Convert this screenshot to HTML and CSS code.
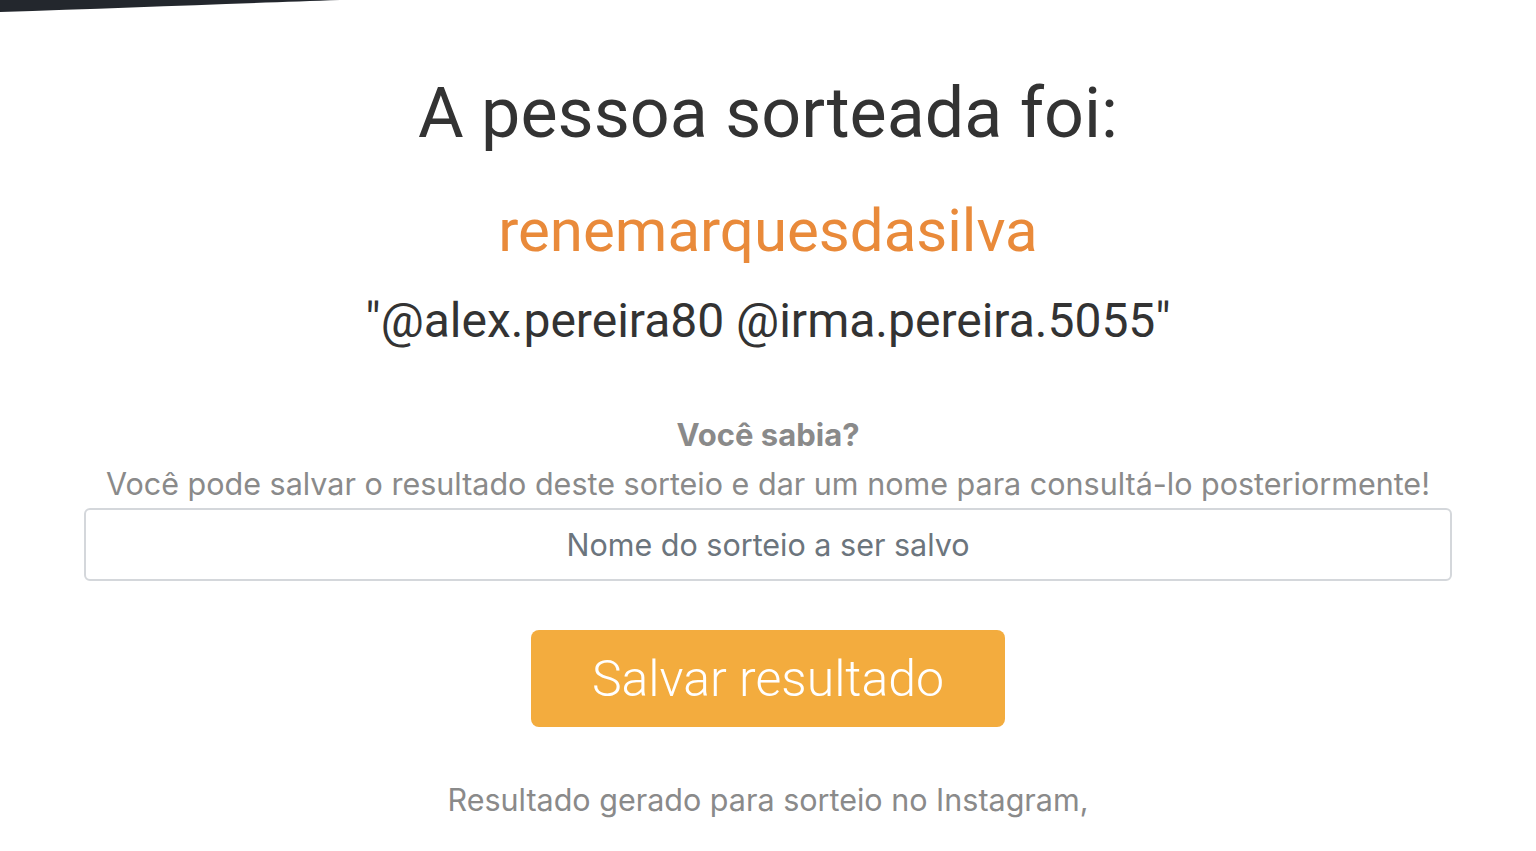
FILE: index.html
```html
<!DOCTYPE html>
<html>

<head>
<meta charset="utf-8">
<link rel="stylesheet" href="styles.css">
</head>

<body>

<svg class="edge" width="360" height="14" viewBox="0 0 360 14">
<path d="M0 0 H340 C250 3, 120 8, 0 12 Z" fill="#23272d"/>
</svg>

<div class="result">

<h1>A pessoa sorteada foi:</h1>

<div class="winner">renemarquesdasilva</div>
<div class="comment">"@alex.pereira80 @irma.pereira.5055"</div>

<div class="tip">
<div class="tip-title">Você sabia?</div>
<div class="tip-text">Você pode salvar o resultado deste sorteio e dar um nome para consultá-lo posteriormente!</div>
</div>

<input class="save-name" type="text" placeholder="Nome do sorteio a ser salvo">

<button class="save">Salvar resultado</button>

<div class="footer">Resultado gerado para sorteio no Instagram,</div>

</div>

</body>
</html>
```

FILE: styles.css
```css
body {
    margin: 0;
    background: #fff;
    font-family: Roboto, 'Liberation Sans', sans-serif;
}

.edge {
    position: absolute;
    top: 0;
    left: 0;
}

.result {
    padding: 71px 84px 0;
    text-align: center;
}

h1 {
    margin: 0;
    font-size: 70px;
    line-height: 84px;
    font-weight: 400;
    color: #333;
}

.winner {
    margin-top: 41px;
    font-size: 60px;
    line-height: 70px;
    color: #e98a3a;
}

.comment {
    margin-top: 27px;
    font-size: 48px;
    line-height: 56px;
    color: #333;
}

.tip {
    margin-top: 68px;
    font-family: Inter, 'Liberation Sans', sans-serif;
    color: #8a8a8a;
}

.tip-title {
    font-size: 31px;
    line-height: 36px;
    font-weight: 700;
}

.tip-text {
    margin-top: 13px;
    font-size: 30.5px;
    line-height: 36px;
}

.save-name {
    display: block;
    box-sizing: border-box;
    width: 100%;
    height: 73px;
    margin-top: 6px;
    padding: 0 16px;

    border: 2px solid #d4d7db;
    border-radius: 6px;

    font-family: Inter, 'Liberation Sans', sans-serif;
    font-size: 30.5px;
    text-align: center;
    color: #495057;
}

.save-name::placeholder {
    color: #6c757d;
}

.save {
    display: block;
    width: 474px;
    height: 97px;
    margin: 49px auto 0;

    border: none;
    border-radius: 8px;
    background: #f3ac3e;

    font-family: Roboto, 'Liberation Sans', sans-serif;
    font-weight: 300;
    font-size: 50px;
    color: #fff;
}

.footer {
    margin-top: 55px;
    font-family: Inter, 'Liberation Sans', sans-serif;
    font-size: 30.5px;
    line-height: 36px;
    color: #8a8a8a;
}
```
